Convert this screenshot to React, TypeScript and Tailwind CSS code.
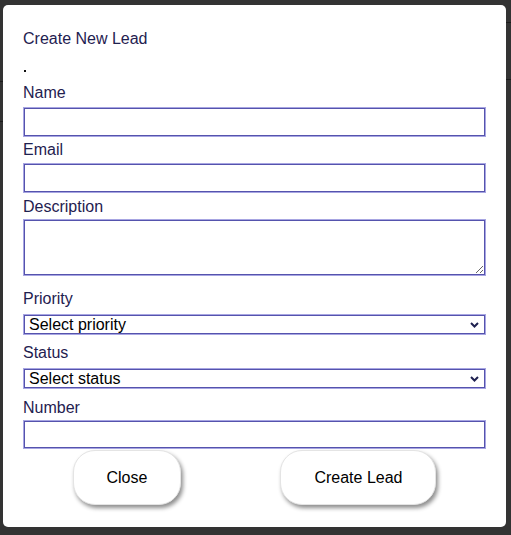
import React from "react";

const FIELD = "block bg-white border border-[#5553ad] shadow-[0_0_0_1px_#a7a5e2] text-[16px] text-black outline-none";

function Label({ text, className = "" }: { text: string; className?: string }) {
  return <label className={`block h-[18px] leading-[22px] text-[16px] text-[#1f2150] ${className}`}>{text}</label>;
}

function Select({ placeholder, options, className = "" }: { placeholder: string; options: string[]; className?: string }) {
  return (
    <div className={`relative w-[461px] ${className}`}>
      <select className={`${FIELD} appearance-none w-full h-[19px] leading-[17px] py-0 pl-[4px] pr-[20px]`} defaultValue="">
        <option value="">{placeholder}</option>
        {options.map((o) => (
          <option key={o} value={o.toLowerCase()}>{o}</option>
        ))}
      </select>
      <svg className="pointer-events-none absolute right-[6px] top-[7px]" width="9" height="6" viewBox="0 0 9 6">
        <path d="M1 1 L4.5 4.5 L8 1" fill="none" stroke="#1f2150" strokeWidth="2" />
      </svg>
    </div>
  );
}

export default function App() {
  return (
    <div className="relative w-full h-[535px] bg-[#333333] overflow-hidden font-['Liberation_Sans',Arial,sans-serif]">
      {/* page content peeking behind the overlay */}
      <div className="absolute left-0 top-[81px] w-[3px] h-px bg-[#1c1c1c]" />
      <div className="absolute left-0 top-[121px] w-[3px] h-px bg-[#1c1c1c]" />
      <div className="absolute right-0 top-[22px] w-[5px] h-px bg-[#1c1c1c]" />
      <div className="absolute right-0 top-[79px] w-[5px] h-px bg-[#1c1c1c]" />

      <div className="relative ml-[3px] pt-[5px]">
        <div className="w-[503px] h-[522px] bg-white rounded-[5px] px-[20px] pt-[23px] flex flex-col">
          <h2 className="h-[18px] leading-[22px] text-[16px] font-normal text-[#1f2150]">Create New Lead</h2>
          <div className="mt-[24px] ml-[1px] w-[2px] h-[2px] bg-[#111]" />

          <div className="mx-[1px] flex flex-col">
            <Label text="Name" className="mt-[10px] -ml-px" />
            <input type="text" className={`${FIELD} mt-[8px] w-[461px] h-[28px] px-[2px]`} />

            <Label text="Email" className="mt-[3px] -ml-px" />
            <input type="email" className={`${FIELD} mt-[7px] w-[461px] h-[28px] px-[2px]`} />

            <Label text="Description" className="mt-[4px] -ml-px" />
            <textarea className={`${FIELD} mt-[6px] w-[461px] h-[55px] px-[2px] resize`} />

            <Label text="Priority" className="mt-[13px] -ml-px" />
            <Select placeholder="Select priority" options={["Low", "Medium", "High"]} className="mt-[9px]" />

            <Label text="Status" className="mt-[8px] -ml-px" />
            <Select placeholder="Select status" options={["New", "Contacted", "Closed"]} className="mt-[9px]" />

            <Label text="Number" className="mt-[9px] -ml-px" />
            <input type="tel" className={`${FIELD} mt-[6px] w-[461px] h-[27px] px-[2px]`} />
          </div>

          <div className="mt-[2px] flex justify-around">
            <button className="h-[55px] px-[33px] rounded-[22px] bg-white border border-[#e4e4e4] text-[16px] text-black shadow-[2px_3px_4px_rgba(0,0,0,0.45)]">
              Close
            </button>
            <button className="h-[55px] px-[33px] rounded-[22px] bg-white border border-[#e4e4e4] text-[16px] text-black shadow-[2px_3px_4px_rgba(0,0,0,0.45)]">
              Create Lead
            </button>
          </div>
        </div>
      </div>
    </div>
  );
}
